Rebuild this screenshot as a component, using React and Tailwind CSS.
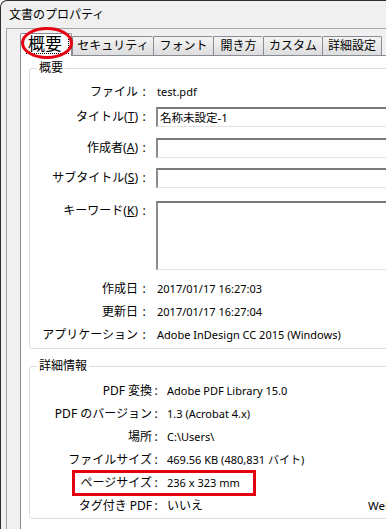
import React from "react";

const TABS = [
  { label: "セキュリティ", w: "w-[81px]" },
  { label: "フォント", w: "w-[60px]" },
  { label: "開き方", w: "w-[50px]" },
  { label: "カスタム", w: "w-[59px]" },
  { label: "詳細設定", w: "w-[60px] border-r" },
];

const Acc = ({ k }) => (
  <span>
    (<span className="underline underline-offset-1">{k}</span>)
  </span>
);

/* ---------------- group 1 rows ---------------- */

function Row({ label, className = "", top = false, children }) {
  return (
    <div className={`flex ${top ? "items-start" : "items-center"} ${className}`}>
      <div className={`shrink-0 w-[108px] mr-[2px] text-right text-[12px] leading-[16px] whitespace-nowrap ${top ? "pt-[2px]" : ""}`}>
        {label}
      </div>
      <div className={`shrink-0 w-[8px] text-center text-[12px] leading-[16px] ${top ? "pt-[2px]" : ""}`}>:</div>
      <div className="ml-[8px] flex-1 h-full">{children}</div>
    </div>
  );
}

function Input({ value = "", className = "h-[20px]" }) {
  return (
    <div
      className={`${className} bg-white border-t-2 border-l-2 border-b border-t-[#7a7a7a] border-l-[#8c8c8c] border-b-[#e3e3e3] pl-[2px] text-[11.5px] leading-[16px] flex items-center`}
    >
      {value}
    </div>
  );
}

/* ---------------- group 2 rows ---------------- */

function InfoRow({ label, children }) {
  return (
    <div className="flex items-center h-[23px]">
      <div className="shrink-0 w-[122px] text-right text-[12px] leading-[16px] whitespace-nowrap">{label}</div>
      <div className="shrink-0 w-[8px] text-center text-[12px] leading-[16px]">:</div>
      <div className="ml-[7px] text-[11px] leading-[16px] whitespace-nowrap flex items-center">{children}</div>
    </div>
  );
}

function GroupBox({ title, className = "", children }) {
  return (
    <div className={`relative w-[400px] border border-[#d5dfe5] rounded-[3px] ${className}`}>
      <div className="absolute -top-[9px] left-[7px] bg-white px-[2px] text-[12px] leading-[16px]">{title}</div>
      {children}
    </div>
  );
}

export default function App() {
  return (
    <div className="relative w-[386px] h-[529px] overflow-hidden bg-[#f0f0f0] border-l border-t border-[#2e2e2e] rounded-tl-[7px] text-black font-['Noto_Sans','Noto_Sans_CJK_JP',sans-serif]">
      {/* title bar */}
      <div className="h-[27px] pl-[8px] pt-[6px] text-[12px] leading-[16px]">文書のプロパティ</div>

      {/* client area */}
      <div className="ml-[5px] h-full border-l border-t border-[#a6a6a6] pl-[13px] pt-[4px]">
        {/* tabs */}
        <div className="flex items-end">
          <div className="relative z-10 -mb-px w-[52px] h-[23px] bg-white border-l border-t border-r border-[#898c95] rounded-t-[2px]">
            <div className="ml-[5px] mt-[1px] w-[43px] h-[19px] border-r border-b border-dotted border-black flex items-center pl-[2px] text-[17px] leading-[18px]">
              概要
            </div>
          </div>
          {TABS.map((t) => (
            <div
              key={t.label}
              className={`${t.w} h-[19px] border-l border-t border-[#898c95] rounded-t-[2px] bg-linear-to-b from-[#f4f4f4] to-[#dddddd] flex items-center justify-center text-[12px] leading-[16px] whitespace-nowrap`}
            >
              {t.label}
            </div>
          ))}
        </div>

        {/* tab page */}
        <div className="w-[420px] h-[600px] bg-white border-l border-t border-[#898c95] pl-[8px] pt-[12px]">
          <GroupBox title="概要" className="pt-[13px] pb-[3px]">
            <Row label="ファイル" className="h-[20px]">
              <div className="h-full flex items-center pl-px text-[11px] leading-[16px]">test.pdf</div>
            </Row>
            <Row label={<>タイトル<Acc k="T" /></>} className="h-[20px] mt-[5px]">
              <Input value="名称未設定-1" />
            </Row>
            <Row label={<>作成者<Acc k="A" /></>} className="h-[20px] mt-[11px]">
              <Input />
            </Row>
            <Row label={<>サブタイトル<Acc k="S" /></>} className="h-[20px] mt-[10px]">
              <Input />
            </Row>
            <Row label={<>キーワード<Acc k="K" /></>} className="h-[69px] mt-[13px]" top>
              <Input className="h-[69px]" />
            </Row>
            <Row label="作成日" className="h-[20px] mt-[9px]">
              <div className="h-full flex items-center pl-px text-[11px] leading-[16px]">2017/01/17 16:27:03</div>
            </Row>
            <Row label="更新日" className="h-[20px] mt-[3px]">
              <div className="h-full flex items-center pl-px text-[11px] leading-[16px]">2017/01/17 16:27:04</div>
            </Row>
            <Row label="アプリケーション" className="h-[20px] mt-[3px]">
              <div className="h-full flex items-center pl-px text-[11px] leading-[16px] whitespace-nowrap">
                Adobe InDesign CC 2015 (Windows)
              </div>
            </Row>
          </GroupBox>

          <GroupBox title="詳細情報" className="mt-[17px] pt-[12px] pb-[1px]">
            <InfoRow label="PDF 変換">Adobe PDF Library 15.0</InfoRow>
            <InfoRow label="PDF のバージョン">1.3 (Acrobat 4.x)</InfoRow>
            <InfoRow label="場所">C:\Users\</InfoRow>
            <InfoRow label="ファイルサイズ">469.56 KB (480,831 バイト)</InfoRow>
            <InfoRow label="ページサイズ">236 x 323 mm</InfoRow>
            <InfoRow label="タグ付き PDF">
              <span className="inline-block shrink-0 w-[201px] text-[12px]">いいえ</span>
              <span className="shrink-0 text-[11.5px]">Web 表示用に最適化 : いいえ</span>
            </InfoRow>
          </GroupBox>
        </div>
      </div>

      {/* annotations */}
      <svg className="absolute z-20 left-[19px] top-[25px]" width="54" height="34" viewBox="0 0 54 34">
        <ellipse cx="27" cy="17" rx="24.5" ry="14.5" fill="none" stroke="#e50012" strokeWidth="3" />
      </svg>
      <div className="absolute z-20 left-[71px] top-[469px] w-[184px] h-[26px] border-[3px] border-[#e50012]" />
    </div>
  );
}
